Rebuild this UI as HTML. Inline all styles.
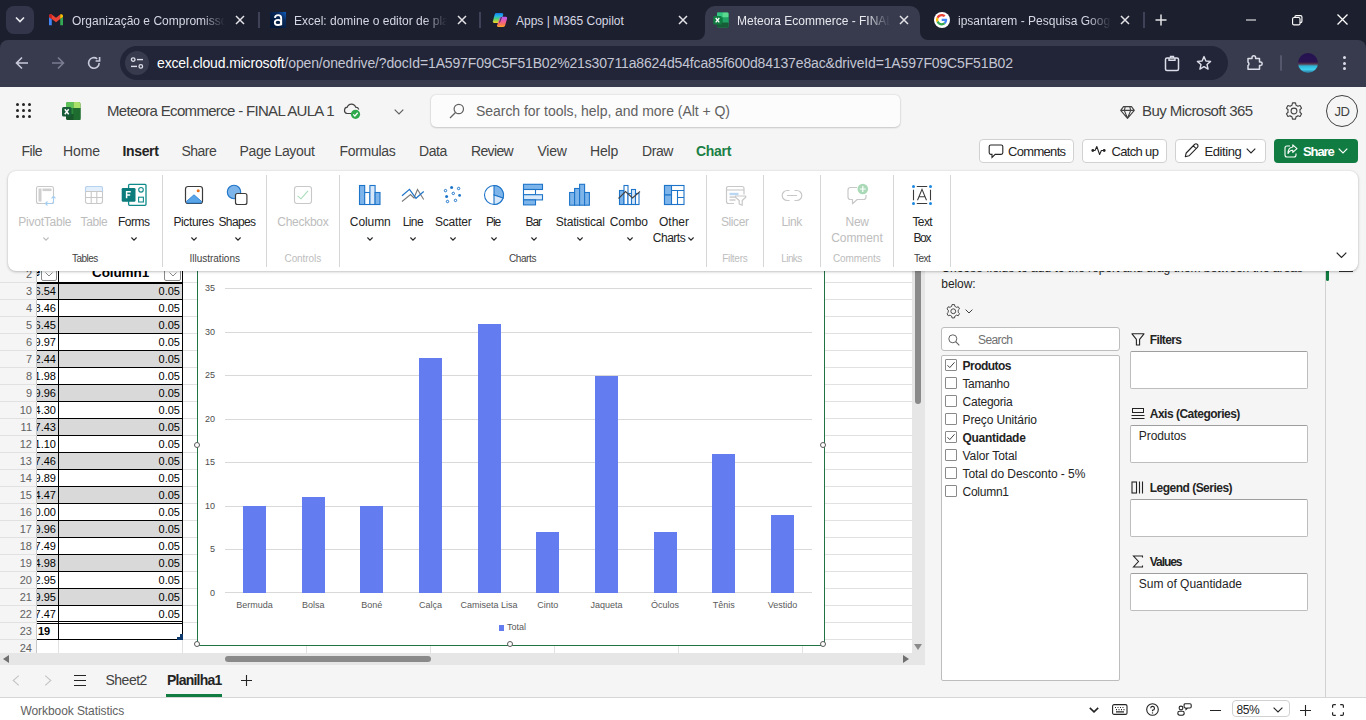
<!DOCTYPE html>
<html><head><meta charset="utf-8">
<style>
*{box-sizing:border-box;margin:0;padding:0}
html,body{width:1366px;height:720px;overflow:hidden;background:#f5f5f5;font-family:"Liberation Sans",sans-serif;}
.a{position:absolute}
.t{position:absolute;white-space:nowrap;line-height:1;z-index:2}
svg{position:absolute;overflow:visible}
/* chrome */
#tabstrip{left:0;top:0;width:1366px;height:52px;background:#1c1f2e}
#toolbar{left:0;top:40px;width:1366px;height:47px;background:#373b4d;border-radius:8px 8px 0 0}
.tabt{color:#d6d7e4;font-size:12px;top:15px;height:14px}
.fade{overflow:hidden;-webkit-mask-image:linear-gradient(90deg,#000 85%,transparent 100%);mask-image:linear-gradient(90deg,#000 85%,transparent 100%)}
.fade2{overflow:hidden;-webkit-mask-image:linear-gradient(90deg,#000 85%,transparent 100%);mask-image:linear-gradient(90deg,#000 85%,transparent 100%)}
.m{top:144px;font-size:14px;color:#424242}
.btn{top:139px;height:24px;border-radius:4px;background:#fff;border:1px solid #d1d1d1}
.bt{top:145px;font-size:13px;color:#242424}
.c{font-size:11px;color:#000;text-align:right}
.sep{width:2px;height:16px;top:12px;background:#3f4256;margin-left:-1px}
</style></head><body>
<!-- CHROME -->
<div class="a" id="tabstrip"></div>
<div class="a" id="toolbar"></div>

<!-- tab search button -->
<div class="a" style="left:6px;top:6px;width:28px;height:28px;border-radius:8px;background:#33364a"></div>
<svg style="left:14px;top:16px" width="12" height="8" viewBox="0 0 12 8"><path d="M2 1.5 L6 5.5 L10 1.5" fill="none" stroke="#e8e8ee" stroke-width="1.7"/></svg>
<!-- active tab -->
<div class="a" style="left:705px;top:6px;width:215px;height:34px;background:#373b4d;border-radius:10px 10px 0 0"></div>
<svg style="left:697px;top:32px" width="8" height="8"><path d="M8 0 V8 H0 A8 8 0 0 0 8 0Z" fill="#373b4d"/></svg>
<svg style="left:920px;top:32px" width="8" height="8"><path d="M0 0 V8 H8 A8 8 0 0 1 0 0Z" fill="#373b4d"/></svg>
<!-- tab 1 gmail -->
<svg style="left:48px;top:14px" width="16" height="12" viewBox="0 0 16 12">
<path d="M1 11.2 V3 L3.8 5 V11.2Z" fill="#4285f4"/>
<path d="M12.2 11.2 V5 L15 3 V11.2Z" fill="#34a853"/>
<path d="M1 3 V1.9 C1 .4 2.7 -.3 3.8 .6 L8 3.8 L12.2 .6 V5 L8 8.2 L3.8 5Z" fill="#ea4335"/>
<path d="M12.2 .6 C13.3 -.3 15 .4 15 1.9 V3 L12.2 5Z" fill="#fbbc04"/>
<path d="M1 3 V1.9 C1 .4 2.7 -.3 3.8 .6 V5Z" fill="#c5221f"/>
</svg>
<div class="t tabt fade" style="left:72px;width:153px">Organização e Compromissos</div>
<svg class="x" style="left:235px;top:15px" width="10" height="10"><path d="M1 1 L9 9 M9 1 L1 9" stroke="#e3e3e8" stroke-width="1.5"/></svg>
<div class="a sep" style="left:259px"></div>
<!-- tab 2 alura -->
<svg style="left:270px;top:12px" width="16" height="16" viewBox="0 0 16 16"><defs><linearGradient id="al" x1="1" y1="0" x2=".3" y2=".7"><stop offset="0" stop-color="#0f5cc0"/><stop offset=".45" stop-color="#082a5c"/><stop offset="1" stop-color="#041a3c"/></linearGradient></defs><rect width="16" height="16" fill="url(#al)"/><path d="M4.900 5.900 Q5.200 3.100 8.100 3.100 Q11.200 3.100 11.200 6.300 V13.200" fill="none" stroke="#fff" stroke-width="1.900"/><ellipse cx="8" cy="10.400" rx="3.200" ry="2.600" fill="none" stroke="#fff" stroke-width="1.800"/></svg>
<div class="t tabt fade" style="left:294px;width:153px">Excel: domine o editor de planilhas</div>
<svg class="x" style="left:457px;top:15px" width="10" height="10"><path d="M1 1 L9 9 M9 1 L1 9" stroke="#e3e3e8" stroke-width="1.5"/></svg>
<div class="a sep" style="left:480px"></div>
<!-- tab 3 copilot -->
<svg style="left:492px;top:12px" width="16" height="16" viewBox="0 0 16 16">
<defs><linearGradient id="cp1" x1="0" y1="0" x2="0" y2="1"><stop offset="0" stop-color="#1677e8"/><stop offset=".3" stop-color="#22b6e8"/><stop offset=".6" stop-color="#58d070"/><stop offset="1" stop-color="#fbd51c"/></linearGradient>
<linearGradient id="cp2" x1="0" y1="0" x2="0" y2="1"><stop offset="0" stop-color="#b35cf6"/><stop offset=".45" stop-color="#ec5c9c"/><stop offset=".8" stop-color="#fb7a4a"/><stop offset="1" stop-color="#fbb02c"/></linearGradient></defs>
<path d="M4.200 1 H10 Q11.600 1 11.200 2.800 L8.800 9.800 Q8.300 11 6.800 11 H2.200 Q.5 11 .9 9.300 L2.700 2.400 Q3.100 1 4.200 1Z" fill="url(#cp1)"/>
<path d="M9.600 4.800 H13.900 Q15.500 4.800 15.100 6.400 L13.100 13.600 Q12.700 15 11.200 15 H6.200 Q4.600 15 5.100 13.300 L7.600 6.200 Q8.100 4.800 9.600 4.800Z" fill="url(#cp2)"/>
<path d="M8.900 4.900 L7.600 8.700 L7 10.900 Q7.900 10.700 8.300 9.800 L10 4.900Z" fill="#1b1f3a" opacity=".75"/>
</svg>
<div class="t tabt" style="left:516px">Apps | M365 Copilot</div>
<svg class="x" style="left:678px;top:15px" width="10" height="10"><path d="M1 1 L9 9 M9 1 L1 9" stroke="#e3e3e8" stroke-width="1.5"/></svg>
<!-- tab 4 excel active -->
<svg style="left:713px;top:12px" width="16" height="16" viewBox="0 0 16 16">
<rect x="4" y="0.5" width="11.5" height="15" rx="1.5" fill="#21a366"/>
<rect x="4" y="0.5" width="6" height="5" fill="#33c481"/><rect x="9.7" y="0.5" width="5.8" height="5" rx="1" fill="#5bd98f"/>
<rect x="4" y="5.5" width="6" height="5" fill="#107c41"/><rect x="9.7" y="5.5" width="5.8" height="5" fill="#21a366"/>
<rect x="4" y="10.5" width="11.5" height="5" rx="1" fill="#185c37"/>
<rect x="0.3" y="4" width="8.4" height="8.4" rx="1" fill="#107c41"/>
<path d="M2.7 6 L6.3 10.4 M6.3 6 L2.7 10.4" stroke="#fff" stroke-width="1.3"/>
</svg>
<div class="t tabt fade2" style="left:737px;width:153px;color:#e8e8ef">Meteora Ecommerce - FINAL AULA 1</div>
<svg class="x" style="left:899px;top:15px" width="10" height="10"><path d="M1 1 L9 9 M9 1 L1 9" stroke="#e3e3e8" stroke-width="1.5"/></svg>
<!-- tab 5 google -->
<div class="a" style="left:934px;top:12px;width:16px;height:16px;border-radius:8px;background:#fff"></div>
<svg style="left:936.3px;top:14.3px" width="11.400" height="11.400" viewBox="0 0 48 48">
<path fill="#EA4335" d="M24 9.5c3.54 0 6.71 1.22 9.21 3.6l6.85-6.85C35.9 2.38 30.47 0 24 0 14.62 0 6.51 5.38 2.56 13.22l7.98 6.19C12.43 13.72 17.74 9.5 24 9.5z"/>
<path fill="#4285F4" d="M46.98 24.55c0-1.57-.15-3.09-.38-4.55H24v9.02h12.94c-.58 2.96-2.26 5.48-4.78 7.18l7.73 6c4.51-4.18 7.09-10.36 7.09-17.65z"/>
<path fill="#FBBC05" d="M10.53 28.59c-.48-1.45-.76-2.99-.76-4.59s.27-3.14.76-4.59l-7.98-6.19C.92 16.46 0 20.12 0 24c0 3.88.92 7.54 2.56 10.78l7.97-6.19z"/>
<path fill="#34A853" d="M24 48c6.48 0 11.93-2.13 15.89-5.81l-7.73-6c-2.15 1.45-4.92 2.3-8.16 2.3-6.26 0-11.57-4.22-13.47-9.91l-7.98 6.19C6.51 42.62 14.62 48 24 48z"/>
</svg>
<div class="t tabt fade" style="left:958px;width:153px">ipsantarem - Pesquisa Google</div>
<svg class="x" style="left:1120px;top:15px" width="10" height="10"><path d="M1 1 L9 9 M9 1 L1 9" stroke="#e3e3e8" stroke-width="1.5"/></svg>
<div class="a sep" style="left:1144px"></div>
<svg style="left:1155px;top:14px" width="12" height="12"><path d="M6 0.5 V11.5 M0.5 6 H11.5" stroke="#e3e3e8" stroke-width="1.5"/></svg>
<!-- window controls -->
<svg style="left:1246px;top:18.500px" width="10" height="2"><path d="M0 1 H10" stroke="#fff" stroke-width="1"/></svg>
<svg style="left:1291.500px;top:14.500px" width="10.500" height="10.500" viewBox="0 0 11 11"><rect x="0.6" y="2.6" width="7.8" height="7.8" rx="1.5" fill="none" stroke="#fff" stroke-width="1.2"/><path d="M3 2.6 V2 Q3 .6 4.4 .6 H9 Q10.4 .6 10.4 2 V6.6 Q10.4 8 9 8 H8.4" fill="none" stroke="#fff" stroke-width="1.2"/></svg>
<svg style="left:1337px;top:14px" width="11" height="11"><path d="M0.5 0.5 L10.5 10.5 M10.5 0.5 L0.5 10.5" stroke="#fff" stroke-width="1.3"/></svg>


<svg style="left:15px;top:56px" width="14" height="14" viewBox="0 0 14 14"><path d="M13 7 H2 M7 1.5 L1.5 7 L7 12.5" fill="none" stroke="#c9cadb" stroke-width="1.6"/></svg>
<svg style="left:51px;top:56px" width="14" height="14" viewBox="0 0 14 14"><path d="M1 7 H12 M7 1.5 L12.5 7 L7 12.5" fill="none" stroke="#7b7e93" stroke-width="1.6"/></svg>
<svg style="left:87px;top:56px" width="14" height="14" viewBox="0 0 14 14"><path d="M12.2 7 A5.3 5.3 0 1 1 10.2 2.8" fill="none" stroke="#c9cadb" stroke-width="1.6"/><path d="M12.6 1 V5 H8.6" fill="none" stroke="#c9cadb" stroke-width="1.6"/></svg>
<div class="a" style="left:120px;top:46px;width:1108px;height:34px;border-radius:17px;background:#212537"></div>
<div class="a" style="left:125px;top:51px;width:24px;height:24px;border-radius:12px;background:#373a4d"></div>
<svg style="left:130px;top:56px" width="14" height="14" viewBox="0 0 14 14"><circle cx="3.2" cy="3.6" r="1.8" fill="none" stroke="#dcdde8" stroke-width="1.3"/><path d="M7 3.6 H13" stroke="#dcdde8" stroke-width="1.4"/><circle cx="10.8" cy="10.4" r="1.8" fill="none" stroke="#dcdde8" stroke-width="1.3"/><path d="M1 10.4 H7" stroke="#dcdde8" stroke-width="1.4"/></svg>
<div class="t" style="left:157px;top:56px;font-size:14px;color:#c4c6d4;letter-spacing:-0.15px"><span style="color:#fff">excel.cloud.microsoft</span>/open/onedrive/?docId=1A597F09C5F51B02%21s30711a8624d54fca85f600d84137e8ac&amp;driveId=1A597F09C5F51B02</div>
<svg style="left:1164px;top:55px" width="16" height="17" viewBox="0 0 16 17"><rect x="1.5" y="3" width="13" height="12.5" rx="1.5" fill="none" stroke="#dcdde8" stroke-width="1.5"/><path d="M5 3 V5.3 H11 V3 M6.5 3 V1.5 H9.5 V3" fill="none" stroke="#dcdde8" stroke-width="1.4"/></svg>
<svg style="left:1196px;top:55px" width="16" height="16" viewBox="0 0 16 16"><path d="M8 1.6 L9.9 6 L14.6 6.4 L11 9.5 L12.1 14.1 L8 11.6 L3.9 14.1 L5 9.5 L1.4 6.4 L6.1 6Z" fill="none" stroke="#dcdde8" stroke-width="1.4" stroke-linejoin="round"/></svg>
<svg style="left:1246px;top:54px" width="18" height="17" viewBox="0 0 18 17"><path d="M2 4.5 H6 V3.5 A1.8 1.8 0 0 1 9.6 3.5 V4.5 H13.5 V8 H14.5 A1.7 1.7 0 0 1 14.5 11.4 H13.5 V15.2 H2 V11.6 A2 2 0 0 0 2 8.2Z" fill="none" stroke="#dcdde8" stroke-width="1.5" stroke-linejoin="round"/></svg>
<div class="a" style="left:1280px;top:55px;width:2px;height:16px;background:#55586c;border-radius:1px"></div>
<div class="a" style="left:1298px;top:53px;width:20px;height:20px;border-radius:10px;background:linear-gradient(180deg,#24124f 0%,#2a1452 45%,#5a3a4a 55%,#2fb6d8 65%,#3fd0f0 82%,#2a6a90 100%)"></div>
<div class="a" style="left:1342.5px;top:56px;width:3px;height:3px;border-radius:2px;background:#dcdde8"></div>
<div class="a" style="left:1342.5px;top:61.5px;width:3px;height:3px;border-radius:2px;background:#dcdde8"></div>
<div class="a" style="left:1342.5px;top:67px;width:3px;height:3px;border-radius:2px;background:#dcdde8"></div>


<!-- waffle -->
<svg style="left:15px;top:102px" width="18" height="18" viewBox="0 0 18 18"><g fill="#242424">
<circle cx="2.5" cy="2.5" r="1.5"/><circle cx="8.5" cy="2.5" r="1.5"/><circle cx="14.5" cy="2.5" r="1.5"/>
<circle cx="2.5" cy="8.5" r="1.5"/><circle cx="8.5" cy="8.5" r="1.5"/><circle cx="14.5" cy="8.5" r="1.5"/>
<circle cx="2.5" cy="14.5" r="1.5"/><circle cx="8.5" cy="14.5" r="1.5"/><circle cx="14.5" cy="14.5" r="1.5"/></g></svg>
<!-- excel logo -->
<svg style="left:62px;top:102px" width="19" height="18" viewBox="0 0 19 18">
<rect x="4" y="0" width="14.5" height="18" rx="2" fill="#1e6c2f"/>
<path d="M4 2 Q4 0 6 0 H11.5 V6 H4Z" fill="#5ec25a"/>
<path d="M11.5 0 H16.5 Q18.5 0 18.5 2 V6 H11.5Z" fill="#a8e06a"/>
<rect x="4" y="6" width="7.5" height="6" fill="#2a8a3a"/>
<rect x="11.500" y="6" width="7" height="12" fill="#1e6c2f"/>
<path d="M4 12 H11.5 V18 H6 Q4 18 4 16Z" fill="#17572a"/>
<rect x="0" y="5" width="9.5" height="9.500" rx="1.500" fill="#185c37"/>
<path d="M2.800 7.300 L6.700 12.200 M6.700 7.300 L2.800 12.200" stroke="#fff" stroke-width="1.400"/>
</svg>
<div class="t" style="left:107px;top:103px;font-size:15px;color:#424242;letter-spacing:-0.68px">Meteora Ecommerce - FINAL AULA 1</div>
<!-- cloud -->
<svg style="left:343px;top:103px" width="18" height="17" viewBox="0 0 18 17"><path d="M9 10.500 H4 A3.200 3.200 0 0 1 4.300 4.200 A4.300 4.300 0 0 1 12.600 4.200 A3.200 3.200 0 0 1 15.800 6.500" fill="none" stroke="#424242" stroke-width="1.200"/><circle cx="12.500" cy="11.300" r="4.600" fill="#2ea94b"/><path d="M10.300 11.400 L11.900 13 L14.700 9.800" fill="none" stroke="#fff" stroke-width="1.300"/></svg>
<svg style="left:394px;top:109px" width="10" height="6" viewBox="0 0 10 6"><path d="M0.700 0.700 L5 5 L9.300 0.700" fill="none" stroke="#616161" stroke-width="1.200"/></svg>
<!-- search -->
<div class="a" style="left:431px;top:95px;width:469px;height:32px;background:#fcfcfc;border-radius:5px;box-shadow:0 0 2px rgba(0,0,0,.18),0 1px 2px rgba(0,0,0,.14)"></div>
<svg style="left:449px;top:103px" width="16" height="16" viewBox="0 0 16 16"><circle cx="9.800" cy="6" r="4.700" fill="none" stroke="#616161" stroke-width="1.200"/><path d="M6.500 9.500 L1 15" stroke="#616161" stroke-width="1.300"/></svg>
<div class="t" style="left:476px;top:104px;font-size:14px;color:#616161;letter-spacing:-0.04px">Search for tools, help, and more (Alt + Q)</div>
<!-- buy -->
<svg style="left:1120px;top:106px" width="15" height="13" viewBox="0 0 15 13"><path d="M3.500 .6 H11.500 L14.300 4.400 L7.500 12.300 L.7 4.400Z M.7 4.400 H14.300 M5.300 .6 L4.300 4.400 L7.500 12.300 L10.700 4.400 L9.700 .6" fill="none" stroke="#424242" stroke-width="1.100" stroke-linejoin="round"/></svg>
<div class="t" style="left:1142px;top:103px;font-size:15px;color:#424242;letter-spacing:-0.56px">Buy Microsoft 365</div>
<!-- gear -->
<svg style="left:1284px;top:100.700px" width="20" height="20" viewBox="0 0 24 24"><path d="M12 8.500a3.500 3.500 0 1 0 0 7 3.500 3.500 0 0 0 0-7Z M10.200 2.300 L9.600 5 A7.500 7.500 0 0 0 7.300 6.300 L4.700 5.500 L2.900 8.600 L4.900 10.500 A7.500 7.500 0 0 0 4.900 13.500 L2.900 15.400 L4.700 18.500 L7.300 17.700 A7.500 7.500 0 0 0 9.600 19 L10.200 21.700 H13.800 L14.400 19 A7.500 7.500 0 0 0 16.700 17.700 L19.300 18.500 L21.100 15.400 L19.100 13.500 A7.500 7.500 0 0 0 19.100 10.500 L21.100 8.600 L19.300 5.500 L16.700 6.300 A7.500 7.500 0 0 0 14.400 5 L13.800 2.300Z" fill="none" stroke="#424242" stroke-width="1.350" stroke-linejoin="round"/></svg>
<div class="a" style="left:1326px;top:95px;width:32px;height:32px;border-radius:16px;border:1px solid #424242"></div>
<div class="t" style="left:1334.500px;top:105px;font-size:13px;color:#424242;letter-spacing:-0.5px">JD</div>
<!-- menu -->
<div class="t m" style="left:21.500px;letter-spacing:-0.5px">File</div>
<div class="t m" style="left:63px;letter-spacing:-0.09px">Home</div>
<div class="t m" style="left:122.500px;letter-spacing:-0.35px;font-weight:700;color:#242424">Insert</div>
<div class="t m" style="left:181.500px;letter-spacing:-0.53px">Share</div>
<div class="t m" style="left:239.500px;letter-spacing:-0.33px">Page Layout</div>
<div class="t m" style="left:339.500px;letter-spacing:-0.3px">Formulas</div>
<div class="t m" style="left:419px;letter-spacing:-0.4px">Data</div>
<div class="t m" style="left:471px;letter-spacing:-0.65px">Review</div>
<div class="t m" style="left:537.500px;letter-spacing:-0.27px">View</div>
<div class="t m" style="left:590px;letter-spacing:-0.2px">Help</div>
<div class="t m" style="left:642px;letter-spacing:-0.42px">Draw</div>
<div class="t m" style="left:696px;letter-spacing:-0.31px;font-weight:700;color:#1b8045">Chart</div>
<!-- right buttons -->
<div class="a btn" style="left:979px;width:95px"></div>
<svg style="left:988px;top:144px" width="16" height="15" viewBox="0 0 16 15"><path d="M2.800 1 H13.200 Q14.800 1 14.800 2.600 V8.800 Q14.800 10.400 13.200 10.400 H7.200 L4 13.400 V10.400 H2.800 Q1.200 10.400 1.200 8.800 V2.600 Q1.200 1 2.800 1Z" fill="none" stroke="#242424" stroke-width="1.100"/></svg>
<div class="t bt" style="left:1008px;letter-spacing:-0.68px">Comments</div>
<div class="a btn" style="left:1082px;width:85px"></div>
<svg style="left:1091px;top:145px" width="15" height="11" viewBox="0 0 15 11"><circle cx="1.800" cy="5.500" r="1.400" fill="#242424"/><circle cx="13.200" cy="5.500" r="1.400" fill="#242424"/><path d="M2.500 5.500 H4 L5.800 1.500 L8.600 9.500 L10.400 5.500 H12.500" fill="none" stroke="#242424" stroke-width="1.100" stroke-linejoin="round"/></svg>
<div class="t bt" style="left:1111.500px;letter-spacing:-0.66px">Catch up</div>
<div class="a btn" style="left:1175px;width:91px"></div>
<svg style="left:1184px;top:143px" width="15" height="15" viewBox="0 0 15 15"><path d="M10.500 1.500 A1.900 1.900 0 0 1 13.400 4.400 L5 12.800 L1.300 13.700 L2.200 10Z M9.300 2.800 L12.200 5.700" fill="none" stroke="#242424" stroke-width="1.100" stroke-linejoin="round"/></svg>
<div class="t bt" style="left:1204.500px;letter-spacing:-0.42px">Editing</div>
<svg style="left:1246px;top:148px" width="10" height="6" viewBox="0 0 10 6"><path d="M0.700 0.700 L5 5 L9.300 0.700" fill="none" stroke="#242424" stroke-width="1.100"/></svg>
<div class="a" style="left:1274px;top:139px;width:84px;height:24px;border-radius:4px;background:#107c41"></div>
<svg style="left:1284px;top:144px" width="14" height="14" viewBox="0 0 14 14"><path d="M6 2 H3 Q1 2 1 4 V11 Q1 13 3 13 H10 Q12 13 12 11 V9.500" fill="none" stroke="#fff" stroke-width="1.100"/><path d="M8.800 .8 L13 4.600 L8.800 8.400 V6.200 Q5.500 6 4 9.500 Q4 3.500 8.800 3Z" fill="none" stroke="#fff" stroke-width="1.100" stroke-linejoin="round"/></svg>
<div class="t bt" style="left:1303px;color:#fff;font-weight:700;letter-spacing:-1.1px">Share</div>
<svg style="left:1338px;top:148px" width="10" height="6" viewBox="0 0 10 6"><path d="M0.700 0.700 L5 5 L9.300 0.700" fill="none" stroke="#fff" stroke-width="1.200"/></svg>

<div class="a" style="left:0;top:0;width:0;height:0;z-index:5"><!--RIBBON0-->
<div class="a" style="left:8px;top:171px;width:1350px;height:100px;background:#fff;border-radius:8px;box-shadow:0 1px 3px rgba(0,0,0,.22),0 0 2px rgba(0,0,0,.10)"></div>
<div class="t" style="left:18.3px;top:216px;font-size:12px;color:#bdbdbd;letter-spacing:-0.24px">PivotTable</div>
<div class="t" style="left:80.5px;top:216px;font-size:12px;color:#bdbdbd;letter-spacing:-0.37px">Table</div>
<div class="t" style="left:117.9px;top:216px;font-size:12px;color:#242424;letter-spacing:-0.48px">Forms</div>
<div class="t" style="left:173.4px;top:216px;font-size:12px;color:#242424;letter-spacing:-0.37px">Pictures</div>
<div class="t" style="left:218.5px;top:216px;font-size:12px;color:#242424;letter-spacing:-0.64px">Shapes</div>
<div class="t" style="left:277.3px;top:216px;font-size:12px;color:#bdbdbd;letter-spacing:-0.27px">Checkbox</div>
<div class="t" style="left:349.8px;top:216px;font-size:12px;color:#242424;letter-spacing:-0.07px">Column</div>
<div class="t" style="left:402.7px;top:216px;font-size:12px;color:#242424;letter-spacing:-0.6px">Line</div>
<div class="t" style="left:435.0px;top:216px;font-size:12px;color:#242424;letter-spacing:-0.22px">Scatter</div>
<div class="t" style="left:486.0px;top:216px;font-size:12px;color:#242424;letter-spacing:-1.07px">Pie</div>
<div class="t" style="left:525.6px;top:216px;font-size:12px;color:#242424;letter-spacing:-1.14px">Bar</div>
<div class="t" style="left:555.8px;top:216px;font-size:12px;color:#242424;letter-spacing:-0.22px">Statistical</div>
<div class="t" style="left:609.8px;top:216px;font-size:12px;color:#242424;letter-spacing:-0.12px">Combo</div>
<div class="t" style="left:659.0px;top:216px;font-size:12px;color:#242424;letter-spacing:-0.0px">Other</div>
<div class="t" style="left:652.8px;top:232px;font-size:12px;color:#242424;letter-spacing:-0.49px">Charts</div>
<div class="t" style="left:721.0px;top:216px;font-size:12px;color:#bdbdbd;letter-spacing:-0.42px">Slicer</div>
<div class="t" style="left:781.5px;top:216px;font-size:12px;color:#bdbdbd;letter-spacing:-0.41px">Link</div>
<div class="t" style="left:845.6px;top:216px;font-size:12px;color:#bdbdbd;letter-spacing:-0.36px">New</div>
<div class="t" style="left:831.3px;top:232px;font-size:12px;color:#bdbdbd;letter-spacing:-0.1px">Comment</div>
<div class="t" style="left:912.4px;top:216px;font-size:12px;color:#242424;letter-spacing:-0.57px">Text</div>
<div class="t" style="left:913.4px;top:232px;font-size:12px;color:#242424;letter-spacing:-1.29px">Box</div>
<div class="t" style="left:72.1px;top:254px;font-size:10px;color:#424242;letter-spacing:-0.56px">Tables</div>
<div class="t" style="left:189.5px;top:254px;font-size:10px;color:#424242;letter-spacing:-0.01px">Illustrations</div>
<div class="t" style="left:284.5px;top:254px;font-size:10px;color:#bdbdbd;letter-spacing:-0.08px">Controls</div>
<div class="t" style="left:509.0px;top:254px;font-size:10px;color:#424242;letter-spacing:-0.41px">Charts</div>
<div class="t" style="left:722.2px;top:254px;font-size:10px;color:#bdbdbd;letter-spacing:-0.29px">Filters</div>
<div class="t" style="left:781.3px;top:254px;font-size:10px;color:#bdbdbd;letter-spacing:-0.59px">Links</div>
<div class="t" style="left:832.9px;top:254px;font-size:10px;color:#bdbdbd;letter-spacing:-0.08px">Comments</div>
<div class="t" style="left:914.0px;top:254px;font-size:10px;color:#424242;letter-spacing:-0.51px">Text</div>
<div class="a" style="left:162px;top:175px;width:1px;height:92px;background:#d6d6d6"></div>
<div class="a" style="left:266px;top:175px;width:1px;height:92px;background:#d6d6d6"></div>
<div class="a" style="left:339px;top:175px;width:1px;height:92px;background:#d6d6d6"></div>
<div class="a" style="left:706px;top:175px;width:1px;height:92px;background:#d6d6d6"></div>
<div class="a" style="left:763px;top:175px;width:1px;height:92px;background:#d6d6d6"></div>
<div class="a" style="left:820px;top:175px;width:1px;height:92px;background:#d6d6d6"></div>
<div class="a" style="left:893px;top:175px;width:1px;height:92px;background:#d6d6d6"></div>
<div class="a" style="left:950px;top:175px;width:1px;height:92px;background:#d6d6d6"></div>
<svg style="left:42.7px;top:236.5px" width="6" height="4" viewBox="0 0 6 4"><path d="M0.4 0.5 L3 3.1 L5.600 0.5" fill="none" stroke="#bdbdbd" stroke-width="1.100"/></svg>
<svg style="left:131.4px;top:236.5px" width="6" height="4" viewBox="0 0 6 4"><path d="M0.4 0.5 L3 3.1 L5.600 0.5" fill="none" stroke="#242424" stroke-width="1.100"/></svg>
<svg style="left:191.4px;top:236.5px" width="6" height="4" viewBox="0 0 6 4"><path d="M0.4 0.5 L3 3.1 L5.600 0.5" fill="none" stroke="#242424" stroke-width="1.100"/></svg>
<svg style="left:234.5px;top:236.5px" width="6" height="4" viewBox="0 0 6 4"><path d="M0.4 0.5 L3 3.1 L5.600 0.5" fill="none" stroke="#242424" stroke-width="1.100"/></svg>
<svg style="left:367.4px;top:236.5px" width="6" height="4" viewBox="0 0 6 4"><path d="M0.4 0.5 L3 3.1 L5.600 0.5" fill="none" stroke="#242424" stroke-width="1.100"/></svg>
<svg style="left:410.4px;top:236.5px" width="6" height="4" viewBox="0 0 6 4"><path d="M0.4 0.5 L3 3.1 L5.600 0.5" fill="none" stroke="#242424" stroke-width="1.100"/></svg>
<svg style="left:450.4px;top:236.5px" width="6" height="4" viewBox="0 0 6 4"><path d="M0.4 0.5 L3 3.1 L5.600 0.5" fill="none" stroke="#242424" stroke-width="1.100"/></svg>
<svg style="left:491.3px;top:236.5px" width="6" height="4" viewBox="0 0 6 4"><path d="M0.4 0.5 L3 3.1 L5.600 0.5" fill="none" stroke="#242424" stroke-width="1.100"/></svg>
<svg style="left:531.4px;top:236.5px" width="6" height="4" viewBox="0 0 6 4"><path d="M0.4 0.5 L3 3.1 L5.600 0.5" fill="none" stroke="#242424" stroke-width="1.100"/></svg>
<svg style="left:577.3px;top:236.5px" width="6" height="4" viewBox="0 0 6 4"><path d="M0.4 0.5 L3 3.1 L5.600 0.5" fill="none" stroke="#242424" stroke-width="1.100"/></svg>
<svg style="left:626.5px;top:236.5px" width="6" height="4" viewBox="0 0 6 4"><path d="M0.4 0.5 L3 3.1 L5.600 0.5" fill="none" stroke="#242424" stroke-width="1.100"/></svg>
<svg style="left:688.3px;top:236.5px" width="6" height="4" viewBox="0 0 6 4"><path d="M0.4 0.5 L3 3.1 L5.600 0.5" fill="none" stroke="#242424" stroke-width="1.100"/></svg>
<svg style="left:1336px;top:252px" width="11" height="7" viewBox="0 0 11 7"><path d="M0.700 0.700 L5.500 5.500 L10.300 0.700" fill="none" stroke="#242424" stroke-width="1.200"/></svg>

<!-- PivotTable -->
<svg style="left:35px;top:185px" width="22" height="22" viewBox="0 0 22 22"><rect x="1.5" y="1.5" width="17" height="17" rx="2" fill="#fff" stroke="#c8c8c8" stroke-width="1.1"/><rect x="3.500" y="3.500" width="3" height="13" fill="#cfcfcf"/><rect x="7.500" y="3.500" width="9" height="2.600" fill="#cfcfcf"/><path d="M10.500 18.500 H17 Q18.500 18.500 18.500 17 V11.500 M16.500 13.300 L18.500 11.200 L20.500 13.300 M12.500 16.500 L10.400 18.500 L12.500 20.500" fill="none" stroke="#a5cdf0" stroke-width="1.100"/><rect x="9" y="15" width="12" height="1" fill="#fff" opacity="0"/></svg>
<!-- Table -->
<svg style="left:84px;top:185px" width="20" height="20" viewBox="0 0 20 20"><rect x="1.500" y="1.500" width="17" height="17" rx="2.200" fill="#fff" stroke="#c8c8c8" stroke-width="1.100"/><path d="M1.500 6.500 V3.500 Q1.500 1.500 3.500 1.500 H16.500 Q18.500 1.500 18.500 3.500 V6.500Z" fill="#e3effb" stroke="#b5d3f0" stroke-width="1.100"/><path d="M1.500 6.500 H18.500 M1.500 12.500 H18.500 M7.200 6.500 V18.500 M12.800 6.500 V18.500" stroke="#c8c8c8" stroke-width="1.100" fill="none"/></svg>
<!-- Forms -->
<svg style="left:121px;top:183px" width="26" height="24" viewBox="0 0 26 24"><rect x="7.600" y="1.300" width="17.400" height="21" rx="1" fill="#fff" stroke="#0f8a8a" stroke-width="1.300"/><circle cx="20" cy="6.800" r="2.300" fill="none" stroke="#0f8a8a" stroke-width="1.100"/><rect x="17.600" y="14.200" width="4.800" height="4.800" fill="none" stroke="#0f8a8a" stroke-width="1.100"/><rect x="0.700" y="5" width="13.800" height="13.800" rx="1.300" fill="#0b7b7b"/><path d="M5.600 15.200 V8.700 H9.800 M5.600 12 H9.200" fill="none" stroke="#fff" stroke-width="1.500"/></svg>
<!-- Pictures -->
<svg style="left:184px;top:185px" width="20" height="20" viewBox="0 0 20 20"><rect x="1.500" y="1.500" width="17" height="17" rx="2.500" fill="#fff" stroke="#3b3b3b" stroke-width="1.200"/><path d="M2.300 16.500 L10 9.800 L17.700 16.500 Q17.500 18 16 18 H4 Q2.500 18 2.300 16.500Z" fill="#5aa5e8" stroke="#2a7fd0" stroke-width=".8"/><circle cx="14.200" cy="5.800" r="1.500" fill="#e8701a"/></svg>
<!-- Shapes -->
<svg style="left:226px;top:184px" width="22" height="22" viewBox="0 0 22 22"><circle cx="8" cy="8" r="6.700" fill="#7db5ea" stroke="#1e74c9" stroke-width="1.100"/><rect x="9.500" y="9.500" width="11.400" height="11" rx="2" fill="#fff" stroke="#3b3b3b" stroke-width="1.200"/></svg>
<!-- Checkbox -->
<svg style="left:293px;top:185px" width="20" height="20" viewBox="0 0 20 20"><rect x="1.500" y="1.500" width="17" height="17" rx="2.500" fill="#fff" stroke="#c8c8c8" stroke-width="1.100"/><path d="M4.500 10.800 L8 13.800 L15 5.800" fill="none" stroke="#a8dcb9" stroke-width="1.100"/></svg>
<!-- Column -->
<svg style="left:358px;top:184px" width="23" height="22" viewBox="0 0 23 22"><rect x="1.500" y="1.500" width="5.200" height="19" fill="#7db5ea" stroke="#1e74c9" stroke-width="1.100"/><rect x="6.700" y="8.500" width="5.200" height="12" fill="#fff" stroke="#1e74c9" stroke-width="1.100"/><rect x="11.900" y="1.500" width="5.200" height="19" fill="#d6e8f9" stroke="#1e74c9" stroke-width="1.100"/><rect x="17.100" y="8.500" width="4.900" height="12" fill="#7db5ea" stroke="#1e74c9" stroke-width="1.100"/></svg>
<!-- Line -->
<svg style="left:401px;top:187px" width="24" height="16" viewBox="0 0 24 16"><path d="M1 14.500 L9.500 7.500 L13 11 L16.500 2.500 L22.700 12.500" fill="none" stroke="#7a7a7a" stroke-width="1.100"/><path d="M1 8.700 L8.500 2.300 L15 11.300 L22.700 4.500" fill="none" stroke="#1e74c9" stroke-width="1.200"/></svg>
<!-- Scatter -->
<svg style="left:443px;top:185px" width="19" height="19" viewBox="0 0 19 19"><g fill="#1e74c9"><circle cx="8.600" cy="2.500" r="1.500"/><circle cx="3.600" cy="11.500" r="1.500"/><circle cx="16.600" cy="10.400" r="1.400"/></g><g fill="#fff" stroke="#1e74c9" stroke-width="1"><circle cx="2.500" cy="5.600" r="1.200"/><circle cx="15.600" cy="3.500" r="1.200"/><circle cx="10.300" cy="8.400" r="1.200"/><circle cx="4.500" cy="16.500" r="1.200"/><circle cx="12.500" cy="15.400" r="1.200"/></g></svg>
<!-- Pie -->
<svg style="left:483px;top:184px" width="22" height="22" viewBox="0 0 22 22"><circle cx="11" cy="11" r="9.500" fill="#fff" stroke="#1e74c9" stroke-width="1.100"/><path d="M11 1.500 A9.500 9.500 0 0 1 20 14 L11 11Z" fill="#7db5ea" stroke="#1e74c9" stroke-width="1.100"/><path d="M20 14 A9.500 9.500 0 0 1 11 20.500 V11Z" fill="#d6e8f9" stroke="#1e74c9" stroke-width="1.100"/></svg>
<!-- Bar -->
<svg style="left:522px;top:183px" width="22" height="23" viewBox="0 0 22 23"><rect x="1.500" y="1.300" width="19" height="5.200" fill="#7db5ea" stroke="#1e74c9" stroke-width="1.100"/><rect x="1.500" y="6.500" width="12" height="5.200" fill="#fff" stroke="#1e74c9" stroke-width="1.100"/><rect x="1.500" y="11.700" width="19" height="5.200" fill="#d6e8f9" stroke="#1e74c9" stroke-width="1.100"/><rect x="1.500" y="16.900" width="12" height="5" fill="#7db5ea" stroke="#1e74c9" stroke-width="1.100"/></svg>
<!-- Statistical -->
<svg style="left:568px;top:183px" width="23" height="24" viewBox="0 0 23 24"><rect x="1.600" y="9.500" width="5" height="12.700" fill="#7db5ea" stroke="#1e74c9" stroke-width="1.100"/><rect x="6.600" y="5.500" width="5" height="16.700" fill="#7db5ea" stroke="#1e74c9" stroke-width="1.100"/><rect x="11.600" y="1.300" width="5" height="20.900" fill="#7db5ea" stroke="#1e74c9" stroke-width="1.100"/><rect x="16.600" y="9.500" width="4.800" height="12.700" fill="#7db5ea" stroke="#1e74c9" stroke-width="1.100"/></svg>
<!-- Combo -->
<svg style="left:618px;top:184px" width="23" height="22" viewBox="0 0 23 22"><rect x="1.500" y="6.500" width="4.500" height="14" fill="#7db5ea" stroke="#1e74c9" stroke-width="1.100"/><rect x="6" y="1.500" width="4" height="19" fill="#fff" stroke="#1e74c9" stroke-width="1.100"/><rect x="10" y="9.500" width="3.500" height="11" fill="#fff" stroke="#1e74c9" stroke-width="1.100"/><rect x="13.500" y="5.500" width="4" height="15" fill="#d6e8f9" stroke="#1e74c9" stroke-width="1.100"/><rect x="17.500" y="9.500" width="3.500" height="11" fill="#fff" stroke="#1e74c9" stroke-width="1.100"/><path d="M0.500 14.500 L7.500 7.500 L14.500 14 L22 7.500" fill="none" stroke="#444" stroke-width="1.100"/></svg>
<!-- Other charts -->
<svg style="left:663px;top:184px" width="22" height="22" viewBox="0 0 22 22"><rect x="1.500" y="1.500" width="19.500" height="19" fill="#fff" stroke="#1e74c9" stroke-width="1.100"/><rect x="1.500" y="1.500" width="7" height="9.500" fill="#7db5ea" stroke="#1e74c9" stroke-width="1.100"/><rect x="1.500" y="11" width="7" height="9.500" fill="#7db5ea" stroke="#1e74c9" stroke-width="1.100"/><path d="M8.500 6.500 H21 M14.500 6.500 V20.500 M14.500 13.500 H21" fill="none" stroke="#1e74c9" stroke-width="1.100"/></svg>
<!-- Slicer -->
<svg style="left:725px;top:185px" width="22" height="22" viewBox="0 0 22 22"><path d="M9 18.500 H3.500 Q1.500 18.500 1.500 16.500 V3.500 Q1.500 1.500 3.500 1.500 H17 Q19 1.500 19 3.500 V9.500" fill="none" stroke="#c8c8c8" stroke-width="1.200"/><path d="M1.500 5 H19" stroke="#c8c8c8" stroke-width="1.100"/><rect x="4.500" y="7.800" width="9" height="2.400" fill="#b9d6f2"/><rect x="4.500" y="11.300" width="6" height="1.600" fill="#d0d0d0"/><rect x="4.500" y="14.200" width="6" height="1.600" fill="#d0d0d0"/><path d="M10.500 11 H20.700 V12.200 L17.200 15.500 V20.300 L14.200 19 V15.500 L10.500 12.200Z" fill="#fff" stroke="#c8c8c8" stroke-width="1.200" stroke-linejoin="round"/></svg>
<!-- Link -->
<svg style="left:781px;top:189px" width="22" height="13" viewBox="0 0 22 13"><path d="M8.500 1.500 H6.200 A5 5 0 0 0 6.200 11.500 H8.500 M13.500 1.500 H15.800 A5 5 0 0 1 15.800 11.500 H13.500 M6 6.500 H16" fill="none" stroke="#c8c8c8" stroke-width="1.200"/></svg>
<!-- New comment -->
<svg style="left:846px;top:183px" width="23" height="23" viewBox="0 0 23 23"><path d="M11 4.500 H4.500 Q2 4.500 2 7 V14 Q2 16.500 4.500 16.500 H6.500 V20.800 L11.200 16.500 H17.500 Q20 16.500 20 14 V12" fill="none" stroke="#c8c8c8" stroke-width="1.200" stroke-linejoin="round"/><circle cx="16.800" cy="6" r="5.300" fill="#a9d9b6"/><path d="M16.800 3 V9 M13.800 6 H19.800" stroke="#fff" stroke-width="1.200"/></svg>
<!-- Text box -->
<svg style="left:911px;top:184px" width="22" height="22" viewBox="0 0 22 22"><path d="M5.800 2.500 H16.200 M5.800 19.500 H16.200 M2.500 5.800 V16.200 M19.500 5.800 V16.200" stroke="#3b3b3b" stroke-width="1.100"/><path d="M6.500 16.300 L11 5.300 L15.500 16.300 M8 12.700 H14" fill="none" stroke="#3b3b3b" stroke-width="1.050"/><g fill="#1e88e0"><circle cx="2.500" cy="2.500" r="1.500"/><circle cx="19.500" cy="2.500" r="1.500"/><circle cx="2.500" cy="19.500" r="1.500"/><circle cx="19.500" cy="19.500" r="1.500"/></g></svg>

</div><!--SHEET0-->
<div class="a" style="left:0;top:271px;width:912px;height:382px;background:#fff"></div>
<div class="a" style="left:0;top:271px;width:37px;height:382px;background:#f5f5f5;border-right:1px solid #c8c8c8"></div>
<div class="a" style="left:0;top:282px;width:912px;height:1px;background:#e1e1e1"></div>
<div class="a" style="left:0;top:299px;width:912px;height:1px;background:#e1e1e1"></div>
<div class="a" style="left:0;top:316px;width:912px;height:1px;background:#e1e1e1"></div>
<div class="a" style="left:0;top:333px;width:912px;height:1px;background:#e1e1e1"></div>
<div class="a" style="left:0;top:350px;width:912px;height:1px;background:#e1e1e1"></div>
<div class="a" style="left:0;top:367px;width:912px;height:1px;background:#e1e1e1"></div>
<div class="a" style="left:0;top:384px;width:912px;height:1px;background:#e1e1e1"></div>
<div class="a" style="left:0;top:401px;width:912px;height:1px;background:#e1e1e1"></div>
<div class="a" style="left:0;top:418px;width:912px;height:1px;background:#e1e1e1"></div>
<div class="a" style="left:0;top:435px;width:912px;height:1px;background:#e1e1e1"></div>
<div class="a" style="left:0;top:452px;width:912px;height:1px;background:#e1e1e1"></div>
<div class="a" style="left:0;top:469px;width:912px;height:1px;background:#e1e1e1"></div>
<div class="a" style="left:0;top:486px;width:912px;height:1px;background:#e1e1e1"></div>
<div class="a" style="left:0;top:503px;width:912px;height:1px;background:#e1e1e1"></div>
<div class="a" style="left:0;top:520px;width:912px;height:1px;background:#e1e1e1"></div>
<div class="a" style="left:0;top:537px;width:912px;height:1px;background:#e1e1e1"></div>
<div class="a" style="left:0;top:554px;width:912px;height:1px;background:#e1e1e1"></div>
<div class="a" style="left:0;top:571px;width:912px;height:1px;background:#e1e1e1"></div>
<div class="a" style="left:0;top:588px;width:912px;height:1px;background:#e1e1e1"></div>
<div class="a" style="left:0;top:605px;width:912px;height:1px;background:#e1e1e1"></div>
<div class="a" style="left:0;top:622px;width:912px;height:1px;background:#e1e1e1"></div>
<div class="a" style="left:0;top:639px;width:912px;height:1px;background:#e1e1e1"></div>
<div class="a" style="left:182px;top:271px;width:1px;height:382px;background:#e1e1e1"></div>
<div class="a" style="left:306px;top:271px;width:1px;height:382px;background:#e1e1e1"></div>
<div class="a" style="left:430px;top:271px;width:1px;height:382px;background:#e1e1e1"></div>
<div class="a" style="left:554px;top:271px;width:1px;height:382px;background:#e1e1e1"></div>
<div class="a" style="left:678px;top:271px;width:1px;height:382px;background:#e1e1e1"></div>
<div class="a" style="left:802px;top:271px;width:1px;height:382px;background:#e1e1e1"></div>
<div class="t" style="left:0;width:32px;text-align:right;top:268.5px;font-size:11px;color:#616161">2</div>
<div class="t" style="left:0;width:32px;text-align:right;top:285.5px;font-size:11px;color:#616161">3</div>
<div class="t" style="left:0;width:32px;text-align:right;top:302.5px;font-size:11px;color:#616161">4</div>
<div class="t" style="left:0;width:32px;text-align:right;top:319.5px;font-size:11px;color:#616161">5</div>
<div class="t" style="left:0;width:32px;text-align:right;top:336.5px;font-size:11px;color:#616161">6</div>
<div class="t" style="left:0;width:32px;text-align:right;top:353.5px;font-size:11px;color:#616161">7</div>
<div class="t" style="left:0;width:32px;text-align:right;top:370.5px;font-size:11px;color:#616161">8</div>
<div class="t" style="left:0;width:32px;text-align:right;top:387.5px;font-size:11px;color:#616161">9</div>
<div class="t" style="left:0;width:32px;text-align:right;top:404.5px;font-size:11px;color:#616161">10</div>
<div class="t" style="left:0;width:32px;text-align:right;top:421.5px;font-size:11px;color:#616161">11</div>
<div class="t" style="left:0;width:32px;text-align:right;top:438.5px;font-size:11px;color:#616161">12</div>
<div class="t" style="left:0;width:32px;text-align:right;top:455.5px;font-size:11px;color:#616161">13</div>
<div class="t" style="left:0;width:32px;text-align:right;top:472.5px;font-size:11px;color:#616161">14</div>
<div class="t" style="left:0;width:32px;text-align:right;top:489.5px;font-size:11px;color:#616161">15</div>
<div class="t" style="left:0;width:32px;text-align:right;top:506.5px;font-size:11px;color:#616161">16</div>
<div class="t" style="left:0;width:32px;text-align:right;top:523.5px;font-size:11px;color:#616161">17</div>
<div class="t" style="left:0;width:32px;text-align:right;top:540.5px;font-size:11px;color:#616161">18</div>
<div class="t" style="left:0;width:32px;text-align:right;top:557.5px;font-size:11px;color:#616161">19</div>
<div class="t" style="left:0;width:32px;text-align:right;top:574.5px;font-size:11px;color:#616161">20</div>
<div class="t" style="left:0;width:32px;text-align:right;top:591.5px;font-size:11px;color:#616161">21</div>
<div class="t" style="left:0;width:32px;text-align:right;top:608.5px;font-size:11px;color:#616161">22</div>
<div class="t" style="left:0;width:32px;text-align:right;top:625.5px;font-size:11px;color:#616161">23</div>
<div class="t" style="left:0;width:32px;text-align:right;top:642.5px;font-size:11px;color:#616161">24</div>
<div class="a" style="left:37px;top:283px;width:146px;height:17px;background:#d9d9d9"></div>
<div class="t c" style="left:37px;width:19px;top:286px;direction:rtl;overflow:hidden">6.54</div>
<div class="t c" style="left:60px;width:120px;top:286px">0.05</div>
<div class="a" style="left:37px;top:300px;width:146px;height:17px;background:#fff"></div>
<div class="t c" style="left:37px;width:19px;top:303px;direction:rtl;overflow:hidden">8.46</div>
<div class="t c" style="left:60px;width:120px;top:303px">0.05</div>
<div class="a" style="left:37px;top:317px;width:146px;height:17px;background:#d9d9d9"></div>
<div class="t c" style="left:37px;width:19px;top:320px;direction:rtl;overflow:hidden">6.45</div>
<div class="t c" style="left:60px;width:120px;top:320px">0.05</div>
<div class="a" style="left:37px;top:334px;width:146px;height:17px;background:#fff"></div>
<div class="t c" style="left:37px;width:19px;top:337px;direction:rtl;overflow:hidden">9.97</div>
<div class="t c" style="left:60px;width:120px;top:337px">0.05</div>
<div class="a" style="left:37px;top:351px;width:146px;height:17px;background:#d9d9d9"></div>
<div class="t c" style="left:37px;width:19px;top:354px;direction:rtl;overflow:hidden">2.44</div>
<div class="t c" style="left:60px;width:120px;top:354px">0.05</div>
<div class="a" style="left:37px;top:368px;width:146px;height:17px;background:#fff"></div>
<div class="t c" style="left:37px;width:19px;top:371px;direction:rtl;overflow:hidden">1.98</div>
<div class="t c" style="left:60px;width:120px;top:371px">0.05</div>
<div class="a" style="left:37px;top:385px;width:146px;height:17px;background:#d9d9d9"></div>
<div class="t c" style="left:37px;width:19px;top:388px;direction:rtl;overflow:hidden">9.96</div>
<div class="t c" style="left:60px;width:120px;top:388px">0.05</div>
<div class="a" style="left:37px;top:402px;width:146px;height:17px;background:#fff"></div>
<div class="t c" style="left:37px;width:19px;top:405px;direction:rtl;overflow:hidden">4.30</div>
<div class="t c" style="left:60px;width:120px;top:405px">0.05</div>
<div class="a" style="left:37px;top:419px;width:146px;height:17px;background:#d9d9d9"></div>
<div class="t c" style="left:37px;width:19px;top:422px;direction:rtl;overflow:hidden">7.43</div>
<div class="t c" style="left:60px;width:120px;top:422px">0.05</div>
<div class="a" style="left:37px;top:436px;width:146px;height:17px;background:#fff"></div>
<div class="t c" style="left:37px;width:19px;top:439px;direction:rtl;overflow:hidden">1.10</div>
<div class="t c" style="left:60px;width:120px;top:439px">0.05</div>
<div class="a" style="left:37px;top:453px;width:146px;height:17px;background:#d9d9d9"></div>
<div class="t c" style="left:37px;width:19px;top:456px;direction:rtl;overflow:hidden">7.46</div>
<div class="t c" style="left:60px;width:120px;top:456px">0.05</div>
<div class="a" style="left:37px;top:470px;width:146px;height:17px;background:#fff"></div>
<div class="t c" style="left:37px;width:19px;top:473px;direction:rtl;overflow:hidden">9.89</div>
<div class="t c" style="left:60px;width:120px;top:473px">0.05</div>
<div class="a" style="left:37px;top:487px;width:146px;height:17px;background:#d9d9d9"></div>
<div class="t c" style="left:37px;width:19px;top:490px;direction:rtl;overflow:hidden">4.47</div>
<div class="t c" style="left:60px;width:120px;top:490px">0.05</div>
<div class="a" style="left:37px;top:504px;width:146px;height:17px;background:#fff"></div>
<div class="t c" style="left:37px;width:19px;top:507px;direction:rtl;overflow:hidden">0.00</div>
<div class="t c" style="left:60px;width:120px;top:507px">0.05</div>
<div class="a" style="left:37px;top:521px;width:146px;height:17px;background:#d9d9d9"></div>
<div class="t c" style="left:37px;width:19px;top:524px;direction:rtl;overflow:hidden">9.96</div>
<div class="t c" style="left:60px;width:120px;top:524px">0.05</div>
<div class="a" style="left:37px;top:538px;width:146px;height:17px;background:#fff"></div>
<div class="t c" style="left:37px;width:19px;top:541px;direction:rtl;overflow:hidden">7.49</div>
<div class="t c" style="left:60px;width:120px;top:541px">0.05</div>
<div class="a" style="left:37px;top:555px;width:146px;height:17px;background:#d9d9d9"></div>
<div class="t c" style="left:37px;width:19px;top:558px;direction:rtl;overflow:hidden">4.98</div>
<div class="t c" style="left:60px;width:120px;top:558px">0.05</div>
<div class="a" style="left:37px;top:572px;width:146px;height:17px;background:#fff"></div>
<div class="t c" style="left:37px;width:19px;top:575px;direction:rtl;overflow:hidden">2.95</div>
<div class="t c" style="left:60px;width:120px;top:575px">0.05</div>
<div class="a" style="left:37px;top:589px;width:146px;height:17px;background:#d9d9d9"></div>
<div class="t c" style="left:37px;width:19px;top:592px;direction:rtl;overflow:hidden">9.95</div>
<div class="t c" style="left:60px;width:120px;top:592px">0.05</div>
<div class="a" style="left:37px;top:606px;width:146px;height:17px;background:#fff"></div>
<div class="t c" style="left:37px;width:19px;top:609px;direction:rtl;overflow:hidden">7.47</div>
<div class="t c" style="left:60px;width:120px;top:609px">0.05</div>
<div class="a" style="left:37px;top:271px;width:146px;height:11px;background:#fff"></div>
<div class="a" style="left:37px;top:271px;width:146px;height:11px;overflow:hidden"><div class="t" style="left:55px;top:-5.5px;font-size:13.5px;font-weight:700;color:#000;letter-spacing:-0.1px">Column1</div><div class="t" style="left:-4px;top:-6px;font-size:13px;font-weight:700;color:#000">e</div><div class="a" style="left:4px;top:-6px;width:16px;height:16px;border:1px solid #8a8a8a;border-radius:2px;background:#fff"></div><svg style="left:8px;top:1px" width="8" height="5" viewBox="0 0 8 5"><path d="M0.500 0.500 L4 4 L7.500 0.500" fill="none" stroke="#8a8a8a" stroke-width="1"/></svg><div class="a" style="left:127px;top:-6px;width:17px;height:16px;border:1px solid #8a8a8a;border-radius:2px;background:#fff"></div><svg style="left:132px;top:1px" width="8" height="5" viewBox="0 0 8 5"><path d="M0.500 0.500 L4 4 L7.500 0.500" fill="none" stroke="#8a8a8a" stroke-width="1"/></svg></div>
<div class="a" style="left:37px;top:282px;width:146px;height:2px;background:#000"></div>
<div class="a" style="left:37px;top:299px;width:146px;height:1px;background:#000"></div>
<div class="a" style="left:37px;top:316px;width:146px;height:1px;background:#000"></div>
<div class="a" style="left:37px;top:333px;width:146px;height:1px;background:#000"></div>
<div class="a" style="left:37px;top:350px;width:146px;height:1px;background:#000"></div>
<div class="a" style="left:37px;top:367px;width:146px;height:1px;background:#000"></div>
<div class="a" style="left:37px;top:384px;width:146px;height:1px;background:#000"></div>
<div class="a" style="left:37px;top:401px;width:146px;height:1px;background:#000"></div>
<div class="a" style="left:37px;top:418px;width:146px;height:1px;background:#000"></div>
<div class="a" style="left:37px;top:435px;width:146px;height:1px;background:#000"></div>
<div class="a" style="left:37px;top:452px;width:146px;height:1px;background:#000"></div>
<div class="a" style="left:37px;top:469px;width:146px;height:1px;background:#000"></div>
<div class="a" style="left:37px;top:486px;width:146px;height:1px;background:#000"></div>
<div class="a" style="left:37px;top:503px;width:146px;height:1px;background:#000"></div>
<div class="a" style="left:37px;top:520px;width:146px;height:1px;background:#000"></div>
<div class="a" style="left:37px;top:537px;width:146px;height:1px;background:#000"></div>
<div class="a" style="left:37px;top:554px;width:146px;height:1px;background:#000"></div>
<div class="a" style="left:37px;top:571px;width:146px;height:1px;background:#000"></div>
<div class="a" style="left:37px;top:588px;width:146px;height:1px;background:#000"></div>
<div class="a" style="left:37px;top:605px;width:146px;height:1px;background:#000"></div>
<div class="a" style="left:37px;top:621px;width:146px;height:3px;background:#000"></div><div class="a" style="left:37px;top:622px;width:146px;height:1px;background:#fff"></div><div class="a" style="left:58px;top:622px;width:1px;height:1px;background:#000"></div><div class="a" style="left:182px;top:622px;width:1px;height:1px;background:#000"></div>
<div class="a" style="left:37px;top:639px;width:146px;height:1px;background:#000"></div>
<div class="a" style="left:58px;top:271px;width:1px;height:369px;background:#000"></div>
<div class="a" style="left:182px;top:271px;width:1px;height:369px;background:#000"></div>
<div class="t" style="left:38px;top:626px;font-size:11px;font-weight:700;color:#000">19</div>
<svg style="left:177px;top:634px" width="6" height="6"><path d="M3 0 H6 V6 H0 V3 H3Z" fill="#0f3a6e"/></svg>
<div class="a" style="left:912px;top:271px;width:13px;height:382px;background:#e6e6e6"></div>
<div class="a" style="left:915px;top:262px;width:6px;height:142px;border-radius:3px;background:#8a8a8a"></div>
<svg style="left:914px;top:644px" width="8" height="6"><path d="M0 0 H8 L4 6Z" fill="#8a8a8a"/></svg>
<div class="a" style="left:58px;top:640px;width:1px;height:13px;background:#e1e1e1"></div>
<!--SHEET1-->
<div class="a" style="left:197px;top:255px;width:628px;height:391px;background:#fff;border:1px solid #217346"></div>
<div class="a" style="left:225px;top:592.4px;width:587px;height:1px;background:#d9d9d9"></div>
<div class="t" style="left:195px;width:20px;text-align:right;top:588.5px;font-size:9px;color:#4d4d4d">0</div>
<div class="a" style="left:225px;top:548.9px;width:587px;height:1px;background:#d9d9d9"></div>
<div class="t" style="left:195px;width:20px;text-align:right;top:545.0px;font-size:9px;color:#4d4d4d">5</div>
<div class="a" style="left:225px;top:505.5px;width:587px;height:1px;background:#d9d9d9"></div>
<div class="t" style="left:195px;width:20px;text-align:right;top:501.6px;font-size:9px;color:#4d4d4d">10</div>
<div class="a" style="left:225px;top:462.0px;width:587px;height:1px;background:#d9d9d9"></div>
<div class="t" style="left:195px;width:20px;text-align:right;top:458.1px;font-size:9px;color:#4d4d4d">15</div>
<div class="a" style="left:225px;top:418.5px;width:587px;height:1px;background:#d9d9d9"></div>
<div class="t" style="left:195px;width:20px;text-align:right;top:414.6px;font-size:9px;color:#4d4d4d">20</div>
<div class="a" style="left:225px;top:375.0px;width:587px;height:1px;background:#d9d9d9"></div>
<div class="t" style="left:195px;width:20px;text-align:right;top:371.1px;font-size:9px;color:#4d4d4d">25</div>
<div class="a" style="left:225px;top:331.6px;width:587px;height:1px;background:#d9d9d9"></div>
<div class="t" style="left:195px;width:20px;text-align:right;top:327.7px;font-size:9px;color:#4d4d4d">30</div>
<div class="a" style="left:225px;top:288.1px;width:587px;height:1px;background:#d9d9d9"></div>
<div class="t" style="left:195px;width:20px;text-align:right;top:284.2px;font-size:9px;color:#4d4d4d">35</div>
<div class="a" style="left:243.0px;top:506.1px;width:23px;height:86.9px;background:#637df0"></div>
<div class="t" style="left:214.5px;width:80px;text-align:center;top:601px;font-size:9px;color:#595959">Bermuda</div>
<div class="a" style="left:301.7px;top:497.4px;width:23px;height:95.6px;background:#637df0"></div>
<div class="t" style="left:273.2px;width:80px;text-align:center;top:601px;font-size:9px;color:#595959">Bolsa</div>
<div class="a" style="left:360.3px;top:506.1px;width:23px;height:86.9px;background:#637df0"></div>
<div class="t" style="left:331.8px;width:80px;text-align:center;top:601px;font-size:9px;color:#595959">Boné</div>
<div class="a" style="left:419.0px;top:358.3px;width:23px;height:234.7px;background:#637df0"></div>
<div class="t" style="left:390.5px;width:80px;text-align:center;top:601px;font-size:9px;color:#595959">Calça</div>
<div class="a" style="left:477.6px;top:323.5px;width:23px;height:269.5px;background:#637df0"></div>
<div class="t" style="left:449.1px;width:80px;text-align:center;top:601px;font-size:9px;color:#595959">Camiseta Lisa</div>
<div class="a" style="left:536.3px;top:532.1px;width:23px;height:60.9px;background:#637df0"></div>
<div class="t" style="left:507.8px;width:80px;text-align:center;top:601px;font-size:9px;color:#595959">Cinto</div>
<div class="a" style="left:594.9px;top:375.6px;width:23px;height:217.3px;background:#637df0"></div>
<div class="t" style="left:566.4px;width:80px;text-align:center;top:601px;font-size:9px;color:#595959">Jaqueta</div>
<div class="a" style="left:653.6px;top:532.1px;width:23px;height:60.9px;background:#637df0"></div>
<div class="t" style="left:625.1px;width:80px;text-align:center;top:601px;font-size:9px;color:#595959">Óculos</div>
<div class="a" style="left:712.2px;top:453.9px;width:23px;height:139.1px;background:#637df0"></div>
<div class="t" style="left:683.7px;width:80px;text-align:center;top:601px;font-size:9px;color:#595959">Tênis</div>
<div class="a" style="left:770.9px;top:514.8px;width:23px;height:78.2px;background:#637df0"></div>
<div class="t" style="left:742.4px;width:80px;text-align:center;top:601px;font-size:9px;color:#595959">Vestido</div>
<div class="a" style="left:499px;top:625px;width:5px;height:6px;background:#637df0"></div>
<div class="t" style="left:507px;top:623px;font-size:9px;color:#595959">Total</div>
<div class="a" style="left:194px;top:442px;width:6px;height:6px;border-radius:3px;border:1px solid #595959;background:#fff"></div>
<div class="a" style="left:820px;top:442px;width:6px;height:6px;border-radius:3px;border:1px solid #595959;background:#fff"></div>
<div class="a" style="left:194px;top:641px;width:6px;height:6px;border-radius:3px;border:1px solid #595959;background:#fff"></div>
<div class="a" style="left:507px;top:641px;width:6px;height:6px;border-radius:3px;border:1px solid #595959;background:#fff"></div>
<div class="a" style="left:820px;top:641px;width:6px;height:6px;border-radius:3px;border:1px solid #595959;background:#fff"></div>
<div class="a" style="left:925px;top:271px;width:441px;height:427px;background:#f5f5f5"></div>
<div class="a" style="left:1325px;top:271px;width:1px;height:427px;background:#d1d1d1"></div>
<div class="a" style="left:1326px;top:268px;width:3px;height:13px;border-radius:0 0 2px 2px;background:#107c41"></div>
<div class="a" style="left:1339px;top:271px;width:14px;height:1px;background:#333"></div>
<div class="t" style="left:941.3px;top:278px;font-size:12px;font-weight:400;color:#242424;letter-spacing:-0.08px">below:</div>
<div class="t" style="left:941.3px;top:262px;font-size:12px;font-weight:400;color:#242424;letter-spacing:0.02px">Choose fields to add to the report and drag them between the areas</div>
<div class="t" style="left:978.1px;top:334px;font-size:12px;font-weight:400;color:#707070;letter-spacing:-0.63px">Search</div>
<div class="t" style="left:962.5px;top:360px;font-size:12px;font-weight:700;color:#242424;letter-spacing:-0.52px">Produtos</div>
<div class="t" style="left:962.5px;top:378px;font-size:12px;font-weight:400;color:#242424;letter-spacing:-0.38px">Tamanho</div>
<div class="t" style="left:962.5px;top:396px;font-size:12px;font-weight:400;color:#242424;letter-spacing:-0.23px">Categoria</div>
<div class="t" style="left:962.5px;top:414px;font-size:12px;font-weight:400;color:#242424;letter-spacing:-0.12px">Preço Unitário</div>
<div class="t" style="left:962.5px;top:432px;font-size:12px;font-weight:700;color:#242424;letter-spacing:-0.3px">Quantidade</div>
<div class="t" style="left:962.5px;top:450px;font-size:12px;font-weight:400;color:#242424;letter-spacing:-0.08px">Valor Total</div>
<div class="t" style="left:962.5px;top:468px;font-size:12px;font-weight:400;color:#242424;letter-spacing:-0.06px">Total do Desconto - 5%</div>
<div class="t" style="left:962.5px;top:486px;font-size:12px;font-weight:400;color:#242424;letter-spacing:-0.26px">Column1</div>
<div class="t" style="left:1149.8px;top:334px;font-size:12px;font-weight:700;color:#242424;letter-spacing:-0.64px">Filters</div>
<div class="t" style="left:1149.8px;top:408px;font-size:12px;font-weight:700;color:#242424;letter-spacing:-0.51px">Axis (Categories)</div>
<div class="t" style="left:1149.8px;top:482px;font-size:12px;font-weight:700;color:#242424;letter-spacing:-0.52px">Legend (Series)</div>
<div class="t" style="left:1149.8px;top:556px;font-size:12px;font-weight:700;color:#242424;letter-spacing:-1.07px">Values</div>
<div class="t" style="left:1138.8px;top:430px;font-size:12px;font-weight:400;color:#242424;letter-spacing:-0.08px">Produtos</div>
<div class="t" style="left:1138.8px;top:578px;font-size:12px;font-weight:400;color:#242424;letter-spacing:-0.01px">Sum of Quantidade</div>
<svg style="left:945px;top:303px" width="16.500" height="16.500" viewBox="0 0 24 24"><path d="M12 8.500a3.500 3.500 0 1 0 0 7 3.500 3.500 0 0 0 0-7Z M10.200 2.300 L9.600 5 A7.500 7.500 0 0 0 7.300 6.300 L4.700 5.500 L2.900 8.600 L4.900 10.500 A7.500 7.500 0 0 0 4.900 13.500 L2.900 15.400 L4.700 18.500 L7.300 17.700 A7.500 7.500 0 0 0 9.600 19 L10.200 21.700 H13.800 L14.400 19 A7.500 7.500 0 0 0 16.700 17.700 L19.300 18.500 L21.100 15.400 L19.100 13.500 A7.500 7.500 0 0 0 19.100 10.500 L21.100 8.600 L19.300 5.500 L16.700 6.300 A7.500 7.500 0 0 0 14.400 5 L13.800 2.300Z" fill="none" stroke="#424242" stroke-width="1.400" stroke-linejoin="round"/></svg>
<svg style="left:965px;top:309px" width="8" height="5" viewBox="0 0 8 5"><path d="M0.600 0.600 L4 4 L7.400 0.600" fill="none" stroke="#424242" stroke-width="1"/></svg>
<div class="a" style="left:941px;top:327px;width:179px;height:24px;background:#fff;border:1px solid #bdbdbd;border-radius:3px"></div>
<svg style="left:948px;top:334px" width="12" height="12" viewBox="0 0 12 12"><circle cx="4.800" cy="4.800" r="4" fill="none" stroke="#616161" stroke-width="1"/><path d="M7.700 7.700 L11.300 11.300" stroke="#616161" stroke-width="1.100"/></svg>
<div class="a" style="left:941px;top:355px;width:179px;height:326px;background:#fff;border:1px solid #bdbdbd;border-radius:2px"></div>
<div class="a" style="left:945px;top:359px;width:12px;height:12px;border:1px solid #8a8a8a;background:#fff;border-radius:1px"></div>
<svg style="left:947px;top:361px" width="8" height="8" viewBox="0 0 8 8"><path d="M0.500 4.300 L2.800 6.600 L7.500 1.300" fill="none" stroke="#424242" stroke-width="1"/></svg>
<div class="a" style="left:945px;top:377px;width:12px;height:12px;border:1px solid #8a8a8a;background:#fff;border-radius:1px"></div>
<div class="a" style="left:945px;top:395px;width:12px;height:12px;border:1px solid #8a8a8a;background:#fff;border-radius:1px"></div>
<div class="a" style="left:945px;top:413px;width:12px;height:12px;border:1px solid #8a8a8a;background:#fff;border-radius:1px"></div>
<div class="a" style="left:945px;top:431px;width:12px;height:12px;border:1px solid #8a8a8a;background:#fff;border-radius:1px"></div>
<svg style="left:947px;top:433px" width="8" height="8" viewBox="0 0 8 8"><path d="M0.500 4.300 L2.800 6.600 L7.500 1.300" fill="none" stroke="#424242" stroke-width="1"/></svg>
<div class="a" style="left:945px;top:449px;width:12px;height:12px;border:1px solid #8a8a8a;background:#fff;border-radius:1px"></div>
<div class="a" style="left:945px;top:467px;width:12px;height:12px;border:1px solid #8a8a8a;background:#fff;border-radius:1px"></div>
<div class="a" style="left:945px;top:485px;width:12px;height:12px;border:1px solid #8a8a8a;background:#fff;border-radius:1px"></div>
<div class="a" style="left:1130px;top:351px;width:178px;height:38px;background:#fff;border:1px solid #bdbdbd;border-top-color:#9e9e9e;border-radius:2px"></div>
<div class="a" style="left:1130px;top:425px;width:178px;height:38px;background:#fff;border:1px solid #bdbdbd;border-top-color:#9e9e9e;border-radius:2px"></div>
<div class="a" style="left:1130px;top:499px;width:178px;height:38px;background:#fff;border:1px solid #bdbdbd;border-top-color:#9e9e9e;border-radius:2px"></div>
<div class="a" style="left:1130px;top:573px;width:178px;height:38px;background:#fff;border:1px solid #bdbdbd;border-top-color:#9e9e9e;border-radius:2px"></div>
<svg style="left:1131px;top:333px" width="14" height="13" viewBox="0 0 14 13"><path d="M1 .8 H13 L8.600 6.300 V12 H5.400 V6.300Z" fill="none" stroke="#242424" stroke-width="1.100" stroke-linejoin="round"/></svg>
<svg style="left:1131px;top:407px" width="14" height="13" viewBox="0 0 14 13"><rect x="1.500" y="1.500" width="11" height="4" fill="none" stroke="#242424" stroke-width="1"/><path d="M.5 8.500 H13.500 M.5 11.500 H13.500" stroke="#242424" stroke-width="1"/></svg>
<svg style="left:1131px;top:481px" width="14" height="13" viewBox="0 0 14 13"><rect x="1" y="1" width="4.500" height="11" fill="none" stroke="#242424" stroke-width="1.100"/><path d="M8.500 .5 V12.500 M11.500 .5 V12.500" stroke="#242424" stroke-width="1.100"/></svg>
<svg style="left:1132px;top:555px" width="12" height="13" viewBox="0 0 12 13"><path d="M10.500 2.500 V1 H1.500 L6.500 6.500 L1.500 12 H10.500 V10.500" fill="none" stroke="#242424" stroke-width="1.100"/></svg>
<div class="a" style="left:0;top:653px;width:925px;height:12px;background:#e6e6e6"></div>
<svg style="left:3px;top:655px" width="6" height="8"><path d="M6 0 V8 L0 4Z" fill="#707070"/></svg>
<svg style="left:903px;top:655px" width="6" height="8"><path d="M0 0 V8 L6 4Z" fill="#707070"/></svg>
<div class="a" style="left:225px;top:656px;width:206px;height:6px;border-radius:3px;background:#8a8a8a"></div>
<div class="a" style="left:0;top:665px;width:925px;height:33px;background:#f5f5f5"></div>
<div class="a" style="left:0;top:697px;width:1366px;height:1px;background:#d6d6d6"></div>
<div class="a" style="left:0;top:698px;width:1366px;height:22px;background:#fff"></div>
<svg style="left:12px;top:675px" width="8" height="11" viewBox="0 0 8 11"><path d="M6.800 .6 L1.200 5.500 L6.800 10.400" fill="none" stroke="#c4c4c4" stroke-width="1.100"/></svg>
<svg style="left:44px;top:675px" width="8" height="11" viewBox="0 0 8 11"><path d="M1.200 .6 L6.800 5.500 L1.200 10.400" fill="none" stroke="#c4c4c4" stroke-width="1.100"/></svg>
<svg style="left:74px;top:675px" width="12" height="11" viewBox="0 0 12 11"><path d="M0 .5 H12 M0 5.500 H12 M0 10.500 H12" stroke="#242424" stroke-width="1"/></svg>
<div class="t" style="left:105.5px;top:673px;font-size:14px;color:#424242;letter-spacing:-0.5px">Sheet2</div>
<div class="t" style="left:167px;top:673px;font-size:14px;font-weight:700;color:#242424;letter-spacing:-0.78px">Planilha1</div>
<div class="a" style="left:166px;top:694px;width:56px;height:3px;background:#107c41"></div>
<svg style="left:241px;top:675px" width="11" height="11" viewBox="0 0 11 11"><path d="M5.500 0 V11 M0 5.500 H11" stroke="#242424" stroke-width="1.100"/></svg>
<div class="t" style="left:20.5px;top:705px;font-size:12px;color:#616161;letter-spacing:-0.08px">Workbook Statistics</div>
<svg style="left:1088.5px;top:707px" width="10" height="6" viewBox="0 0 10 6"><path d="M0.800 0.800 L5 4.800 L9.200 0.800" fill="none" stroke="#242424" stroke-width="1.600"/></svg>
<svg style="left:1112px;top:703.5px" width="16" height="11" viewBox="0 0 16 11"><rect x=".6" y=".6" width="14.400" height="9.800" rx="1.500" fill="none" stroke="#242424" stroke-width="1.100"/><path d="M3 3.500 H4 M5.500 3.500 H6.500 M8 3.500 H9 M10.500 3.500 H11.500 M4 5.600 H5 M6.500 5.600 H7.500 M9 5.600 H10 M11.500 5.600 H12.500 M4 7.900 H12" stroke="#242424" stroke-width="1.100"/></svg>
<svg style="left:1145.5px;top:703px" width="13" height="13" viewBox="0 0 13 13"><circle cx="6.500" cy="6.500" r="5.800" fill="none" stroke="#242424" stroke-width="1.100"/><path d="M4.700 5.200 A1.900 1.900 0 1 1 6.500 7.200 V8.300" fill="none" stroke="#242424" stroke-width="1.100"/><circle cx="6.500" cy="9.900" r=".7" fill="#242424"/></svg>
<svg style="left:1177px;top:702.5px" width="15" height="13" viewBox="0 0 15 13"><circle cx="4" cy="5" r="1.900" fill="none" stroke="#242424" stroke-width="1.100"/><path d="M.8 10.200 Q.8 8.300 2.500 8.300 H5.500 Q7.200 8.300 7.200 10.200 Q7.200 12.300 4 12.300 Q.8 12.300 .8 10.200Z" fill="none" stroke="#242424" stroke-width="1.100"/><path d="M8.300 .7 H13 Q14.200 .7 14.200 1.900 V3.800 Q14.200 5 13 5 H10.500 L9 6.500 V5 H8.300 Q7.100 5 7.100 3.800 V1.900 Q7.100 .7 8.300 .7Z" fill="none" stroke="#242424" stroke-width="1.100"/></svg>
<div class="a" style="left:1210px;top:709.5px;width:11px;height:1px;background:#242424"></div>
<div class="a" style="left:1232px;top:700px;width:58px;height:17px;border:1px solid #d1d1d1;border-radius:4px;background:#fff"></div>
<div class="t" style="left:1236.5px;top:704px;font-size:12px;color:#242424;letter-spacing:-0.4px">85%</div>
<svg style="left:1273px;top:707px" width="10" height="6" viewBox="0 0 10 6"><path d="M0.600 0.600 L5 5 L9.400 0.600" fill="none" stroke="#242424" stroke-width="1.100"/></svg>
<svg style="left:1300px;top:704.500px" width="11" height="11" viewBox="0 0 11 11"><path d="M5.500 0 V11 M0 5.500 H11" stroke="#242424" stroke-width="1.100"/></svg>
<svg style="left:1332px;top:703.500px" width="12" height="12" viewBox="0 0 12 12"><path d="M.6 3.800 V1.800 Q.6 .6 1.800 .6 H3.800 M8.200 .6 H10.200 Q11.400 .6 11.400 1.800 V3.800 M11.400 8.200 V10.200 Q11.400 11.400 10.200 11.400 H8.200 M3.800 11.400 H1.800 Q.6 11.400 .6 10.200 V8.200" fill="none" stroke="#242424" stroke-width="1.200"/></svg>
</body></html>
